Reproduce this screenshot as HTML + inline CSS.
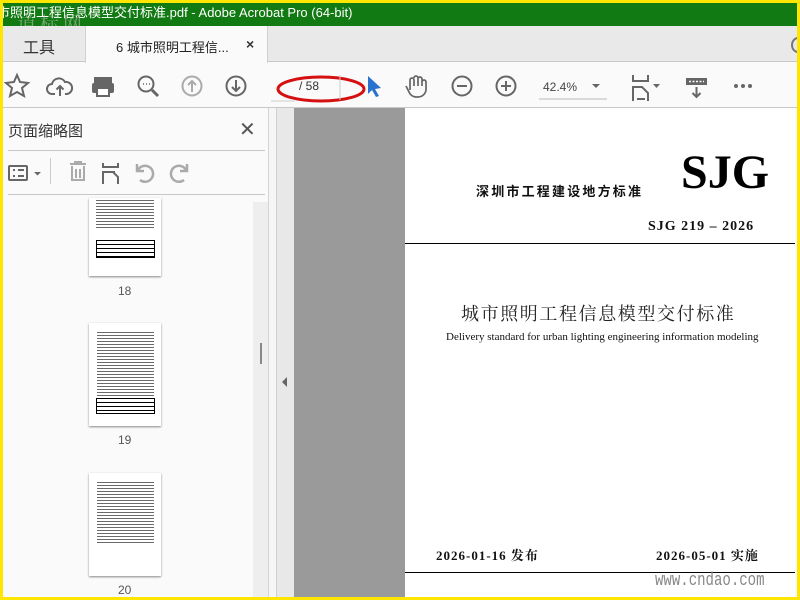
<!DOCTYPE html>
<html><head><meta charset="utf-8"><style>
*{margin:0;padding:0;box-sizing:border-box}
body{width:800px;height:600px;overflow:hidden;background:#ffe600;position:relative;font-family:"Liberation Sans","Noto Sans CJK SC",sans-serif}
.a{position:absolute}
.ser{font-family:"Liberation Serif","Noto Serif CJK SC",serif}
svg{position:absolute;overflow:visible}
</style></head><body>
<div class="a" style="left:3px;top:3px;width:794px;height:594px;background:#fafafa;overflow:hidden">
 <div class="a" style="left:-6px;top:0;width:806px;height:23px;background:#127a12;color:#fff;font-size:13px;line-height:19px;white-space:nowrap">市照明工程信息模型交付标准.pdf - Adobe Acrobat Pro (64-bit)</div>
 <div class="a" style="left:14px;top:6px;color:rgba(200,200,200,.55);font-size:19px;letter-spacing:4px;font-family:'Noto Serif CJK SC',serif">道标网</div>
 <div class="a" style="left:0;top:23px;width:794px;height:36px;background:#e9e9e9;border-bottom:1px solid #c8c8c8"></div>
 <div class="a" style="left:20px;top:31px;font-size:16px;color:#333">工具</div>
 <div class="a" style="left:82px;top:23px;width:183px;height:37px;background:#fafafa;border-left:1px solid #d0d0d0;border-right:1px solid #d0d0d0"></div>
 <div class="a" style="left:113px;top:34px;font-size:13px;color:#222">6 城市照明工程信...</div>
 <div class="a" style="left:243px;top:33px;font-size:14px;color:#333;font-weight:bold">×</div>
 <div class="a" style="left:788px;top:34px;width:14px;height:16px;border:2px solid #777;border-radius:50%"></div>
 <div class="a" style="left:0;top:104px;width:794px;height:1px;background:#c8c8c8"></div>
 <svg width="800" height="110" style="left:-3px;top:-3px" fill="none" stroke="#666" stroke-width="2">
  <path d="M17 75 l3 7 8 1 -6 5 2 8 -7 -4 -7 4 2 -8 -6 -5 8 -1z"/>
  <path d="M55 94 h-3 a5 5 0 0 1 0-10 a7 7 0 0 1 13-2 a5 5 0 0 1 2 12 h-2 M60 96 v-10 m-3.5 3.5 l3.5-3.5 3.5 3.5"/>
  <rect x="95" y="78" width="16" height="5" fill="#666"/><rect x="92" y="83" width="22" height="10" rx="2" fill="#666" stroke="none"/><rect x="97" y="88" width="12" height="8" fill="#fff"/>
  <circle cx="146" cy="84" r="7.5"/><path d="M152 90 l6 6" stroke-width="3"/><path d="M143 84h1M146 84h1M149 84h1" stroke-width="1.5"/>
  <circle cx="192" cy="86" r="9.5" stroke="#aaa"/><path d="M192 92v-11m-4 4l4-4 4 4" stroke="#aaa"/>
  <circle cx="236" cy="86" r="9.5"/><path d="M236 80v11m-4-4l4 4 4-4"/>
  <ellipse cx="321" cy="89" rx="43" ry="12" stroke="#d51010" stroke-width="3"/>
  <path d="M271 101h24M340 75v25" stroke="#ccc" stroke-width="1"/>
  <path d="M368 76 v18 l4-4 4 7 3-1-4-7 6-1z" fill="#2a72d0" stroke="none"/>
  <path d="M410 90 v-10 m0 0 a1.8 1.8 0 0 1 4 0 v6 m0-8 a1.8 1.8 0 0 1 4 0 v8 m0-7 a1.8 1.8 0 0 1 4 0 v7 m0-4 a1.8 1.8 0 0 1 4 0 v8 a8 8 0 0 1-8 7 h-2 a8 8 0 0 1-7-5 l-3-6" stroke-width="1.7"/>
  <circle cx="462" cy="86" r="9.5"/><path d="M457 86h10"/>
  <circle cx="506" cy="86" r="9.5"/><path d="M501 86h10M506 81v10"/>
  <path d="M539 99h68" stroke="#bbb" stroke-width="1"/>
  <path d="M592 84h8l-4 4z" fill="#666" stroke="none"/>
  <path d="M633 75v6h15v-6M633 101v-14h9l6 6v8M637 99h8" stroke-width="2"/><path d="M653 84h7l-3.5 4z" fill="#666" stroke="none"/>
  <rect x="686" y="78" width="21" height="7" fill="#666" stroke="none"/><path d="M689 81.5h15" stroke="#fff" stroke-width="1.5" stroke-dasharray="2 1.5"/><path d="M696.5 87v10m-4-4l4 4 4-4"/>
  <circle cx="736" cy="86" r="2" fill="#666" stroke="none"/><circle cx="743" cy="86" r="2" fill="#666" stroke="none"/><circle cx="750" cy="86" r="2" fill="#666" stroke="none"/>
 </svg>
 <div class="a" style="left:296px;top:76px;font-size:12px;color:#333">/ 58</div>
 <div class="a" style="left:540px;top:77px;font-size:12px;color:#444">42.4%</div>
 <div class="a" style="left:5px;top:117px;font-size:15px;color:#333">页面缩略图</div>
 <div class="a" style="left:236px;top:114px;font-size:20px;color:#555">✕</div>
 <div class="a" style="left:5px;top:147px;width:257px;height:1px;background:#c8c8c8"></div>
 <div class="a" style="left:5px;top:191px;width:257px;height:1px;background:#c8c8c8"></div>
 <svg width="300" height="200" style="left:-3px;top:-3px" fill="none" stroke="#666" stroke-width="2">
  <rect x="9" y="166" width="18" height="14" rx="1"/><path d="M13 170h2M13 176h2M18 170h6M18 176h6"/>
  <path d="M34 172h7l-3.5 3.5z" fill="#666" stroke="none"/>
  <path d="M50.5 158v26" stroke="#ccc" stroke-width="1"/>
  <path d="M70 164h16M75 164v-2h6v2M72 166v14h12v-14M76 169v9M80 169v9" stroke="#aaa"/>
  <path d="M103 163v4h15v-4M103 184v-12h10l5 5v7M105 172h10" stroke-width="2"/>
  <path d="M140 180 a8 8 0 1 0 -2-10 M137 164 v7h7" stroke="#aaa" stroke-width="2.5"/>
  <path d="M184 180 a8 8 0 1 1 2-10 M187 164 v7h-7" stroke="#aaa" stroke-width="2.5"/>
 </svg>
 <div class="a" style="left:250px;top:199px;width:15px;height:395px;background:#eeeeee"></div>
 <div class="a" style="left:257px;top:340px;width:2px;height:21px;background:#888"></div>
 <div class="a" style="left:265px;top:105px;width:1px;height:489px;background:#d4d4d4"></div>
 <div class="a" style="left:266px;top:105px;width:7px;height:489px;background:#f6f6f6"></div>
 <div class="a" style="left:86px;top:195px;width:72px;height:78px;background:#fff;box-shadow:0 1px 2px #888;overflow:hidden">
  <div class="a" style="left:7px;top:2px;width:58px;height:30px;background:repeating-linear-gradient(#444 0 1px,#fff 1px 3px);opacity:.8"></div>
  <div class="a" style="left:7px;top:42px;width:59px;height:18px;border:1px solid #000;background:repeating-linear-gradient(#fff 0 3px,#000 3px 4px)"></div>
 </div>
 <div class="a" style="left:115px;top:281px;font-size:12px;color:#555">18</div>
 <div class="a" style="left:86px;top:320px;width:72px;height:103px;background:#fff;box-shadow:0 1px 2px #888;overflow:hidden">
  <div class="a" style="left:8px;top:9px;width:57px;height:66px;background:repeating-linear-gradient(#444 0 1px,#fff 1px 3px);opacity:.8"></div>
  <div class="a" style="left:7px;top:75px;width:59px;height:16px;border:1px solid #000;background:repeating-linear-gradient(#fff 0 3px,#000 3px 4px)"></div>
 </div>
 <div class="a" style="left:115px;top:430px;font-size:12px;color:#555">19</div>
 <div class="a" style="left:86px;top:470px;width:72px;height:103px;background:#fff;box-shadow:0 1px 2px #888;overflow:hidden">
  <div class="a" style="left:8px;top:9px;width:57px;height:62px;background:repeating-linear-gradient(#444 0 1px,#fff 1px 3px);opacity:.8"></div>
 </div>
 <div class="a" style="left:115px;top:580px;font-size:12px;color:#555">20</div>
 <div class="a" style="left:273px;top:105px;width:18px;height:489px;background:#e8e8e8;border-left:1px solid #d0d0d0"></div>
 <div class="a" style="left:279px;top:374px;width:0;height:0;border-top:5px solid transparent;border-bottom:5px solid transparent;border-right:5px solid #666"></div>
 <div class="a" style="left:291px;top:105px;width:111px;height:489px;background:#9a9a9a"></div>
 <div class="a" style="left:402px;top:105px;width:390px;height:489px;background:#fff"></div>
 <div class="a ser" style="left:473px;top:178px;font-size:13px;font-weight:bold;letter-spacing:2.2px;color:#111;font-family:'Noto Sans CJK SC',sans-serif">深圳市工程建设地方标准</div>
 <div class="a ser" style="left:678px;top:146px;font-size:48px;font-weight:bold;color:#000;line-height:1">SJG</div>
 <div class="a ser" style="left:645px;top:216px;font-size:14px;font-weight:bold;letter-spacing:1px;color:#111">SJG 219 – 2026</div>
 <div class="a" style="left:402px;top:240px;width:390px;height:1px;background:#000"></div>
 <div class="a" style="left:458px;top:297px;font-size:18px;letter-spacing:1.6px;color:#222;font-family:'Noto Serif CJK SC',serif">城市照明工程信息模型交付标准</div>
 <div class="a ser" style="left:443px;top:328px;font-size:11px;color:#111;white-space:nowrap">Delivery standard for urban lighting engineering information modeling</div>
 <div class="a ser" style="left:433px;top:542px;font-size:13px;font-weight:bold;letter-spacing:1px;color:#111">2026-01-16 发布</div>
 <div class="a ser" style="left:653px;top:542px;font-size:13px;font-weight:bold;letter-spacing:1px;color:#111">2026-05-01 实施</div>
 <div class="a" style="left:402px;top:569px;width:390px;height:1px;background:#000"></div>
 <div class="a" style="left:652px;top:568px;font-size:18px;color:#888;font-family:'Liberation Mono',monospace;transform:scaleX(.78);transform-origin:left">www.cndao.com</div>
</div>
</body></html>
